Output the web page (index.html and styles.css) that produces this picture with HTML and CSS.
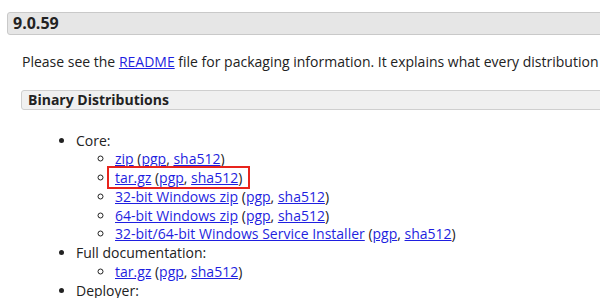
FILE: index.html
```html
<!DOCTYPE html>
<html>
<head>
<meta charset="utf-8">
<link rel="stylesheet" href="styles.css">
</head>
<body>
<div class="page">
  <h3 class="section-head">9.0.59</h3>
  <div class="section-body">
    <p class="intro">Please see the <a href="#">README</a> file for packaging information. It explains what every distribution</p>
    <h4 class="sub-head">Binary Distributions</h4>
    <ul class="dist">
      <li>Core:
        <ul class="files">
          <li><a href="#">zip</a> (<a href="#">pgp</a>, <a href="#">sha512</a>)</li>
          <li><span class="mark"><a href="#">tar.gz</a> (<a href="#">pgp</a>, <a href="#">sha512</a>)</span></li>
          <li><a href="#">32-bit Windows zip</a> (<a href="#">pgp</a>, <a href="#">sha512</a>)</li>
          <li><a href="#">64-bit Windows zip</a> (<a href="#">pgp</a>, <a href="#">sha512</a>)</li>
          <li><a href="#">32-bit/64-bit Windows Service Installer</a> (<a href="#">pgp</a>, <a href="#">sha512</a>)</li>
        </ul>
      </li>
      <li>Full documentation:
        <ul class="files">
          <li><a href="#">tar.gz</a> (<a href="#">pgp</a>, <a href="#">sha512</a>)</li>
        </ul>
      </li>
      <li>Deployer:</li>
    </ul>
  </div>
</div>
</body>
</html>
```
FILE: styles.css
```css
html, body {
  margin: 0;
  padding: 0;
  overflow: hidden;
  background: #fff;
}
body {
  font-family: "Open Sans", "Noto Sans", sans-serif;
  font-size: 14px;
  color: #222;
  line-height: 18.75px;
}
.page {
  width: 1000px;
  padding: 12px 0 0 7px;
}
.section-head {
  margin: 0;
  font-size: 16px;
  font-weight: 700;
  line-height: 21px;
  padding: 0 5px;
  background: #e6e6e6;
  border: 1px solid #c9c9c9;
  border-radius: 3px;
}
.section-body {
  padding-left: 14px;
}
.intro {
  margin: 17.6px 0 0 1px;
}
.sub-head {
  margin: 18.6px 0 0 0;
  font-size: 14px;
  font-weight: 700;
  line-height: 18px;
  padding: 0 6px;
  background: #f0f0f0;
  border: 1px solid #cfcfcf;
  border-radius: 3px;
}
.dist {
  margin: 21.6px 0 0 0;
  padding-left: 55px;
  list-style: disc;
}
.files {
  margin: 0;
  padding-left: 39px;
  list-style: circle;
}
a {
  color: #1f1fe0;
  text-decoration: underline;
}
.mark {
  border: 2px solid #e8241c;
  padding: 0 6px 0 6px;
  margin-left: -8px;
}
```
